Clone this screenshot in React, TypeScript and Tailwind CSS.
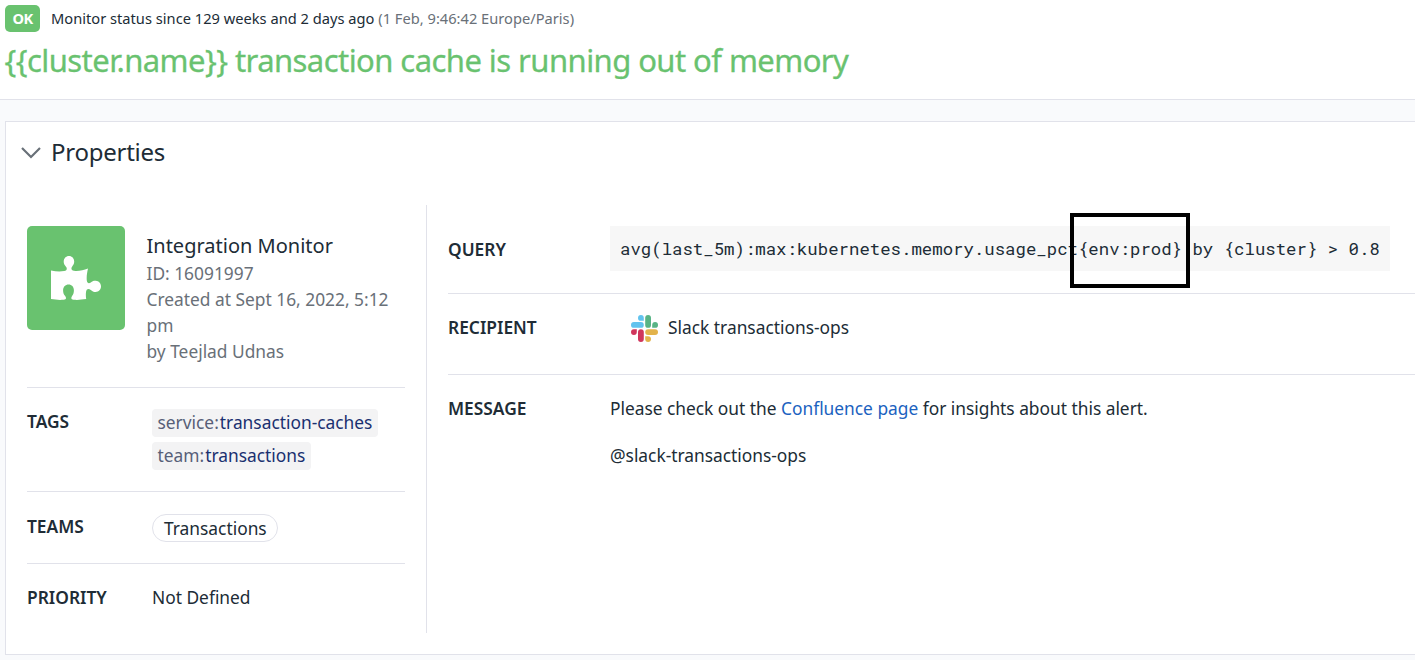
import React from "react";

const dark = "text-[#202c36]";

function Puzzle() {
  return (
    <svg viewBox="0 0 50 44" className="block h-[44px] w-[50px]" fill="#fff">
      <path d="M0 14.5C5 15.6 9 15.8 13.2 15.1C16.2 14.5 16.4 12.4 14.8 10.6C13.4 9 12.7 7.6 12.7 5.6C12.7 2.4 15 0 18 0C21 0 23.2 2.4 23.2 5.6C23.2 7.6 22.4 9 21.2 10.6C19.8 12.4 20.2 14.3 23 14.8C27.6 15.5 32.4 14 37 12.4C36 17 35.4 20.5 35.8 24.5C36.2 27.3 38 27.8 39.8 26.4C41.4 25.1 42.8 24.6 44.8 24.8C47.8 25.1 50 27.2 50 30.3C50 33.6 47.8 36 44.6 36C42.6 36 41.2 35.1 39.8 33.9C37.8 32.2 35.6 32.6 35.1 35.4C34.7 38 34.8 40.5 35.2 43.1C30.5 43.8 26.5 44.2 22.6 43.8C20 43.4 19.8 41.8 21.2 39.8C22.3 38.2 22.9 36.8 22.9 34.2C22.9 31 20.7 28.6 17.6 28.6C14.4 28.6 12.1 31 12.1 34.2C12.1 36.8 12.7 38.2 14 39.8C15.6 41.8 15.4 43.4 12.6 43.8C8.4 44.2 4 43.8 0 43.1Z" />
    </svg>
  );
}

function Slack() {
  return (
    <svg viewBox="0 0 27 27" className="block size-[27px] shrink-0">
      <g fill="#62c3ee">
        <rect x="0" y="7" width="12.8" height="5.8" rx="2.9" />
        <path d="M12.8 5.8H9.9A2.9 2.9 0 1 1 12.8 2.9Z" />
      </g>
      <g fill="#58b485">
        <rect x="14.2" y="0" width="5.8" height="12.8" rx="2.9" />
        <path d="M21.2 12.8V9.9A2.9 2.9 0 1 1 24.1 12.8Z" />
      </g>
      <g fill="#e3b34b">
        <rect x="14.2" y="14.2" width="12.8" height="5.8" rx="2.9" />
        <path d="M14.2 21.2H17.1A2.9 2.9 0 1 1 14.2 24.1Z" />
      </g>
      <g fill="#d0365c">
        <rect x="7" y="14.2" width="5.8" height="12.8" rx="2.9" />
        <path d="M5.8 14.2V17.1A2.9 2.9 0 1 1 2.9 14.2Z" />
      </g>
    </svg>
  );
}

function Tag({ name, value }: { name: string; value: string }) {
  return (
    <div className="flex h-7 w-fit items-center gap-px rounded bg-[#f3f3f4] px-[5.5px] pb-[2px] text-[17.35px] text-[#585f78]">
      <span>{name}:</span>
      <span className="text-[#1a3070]">{value}</span>
    </div>
  );
}

export default function App() {
  return (
    <div className={`h-[660px] w-[1415px] overflow-hidden bg-[#f9fafc] font-['Noto_Sans',sans-serif] ${dark}`}>
      <header className="h-[100px] border-b border-[#e1e2ea] bg-white pt-[5px] pl-[5px]">
        <div className="flex h-[27px] items-center">
          <span className="flex h-[27px] w-[35px] items-center justify-center rounded-[5px] bg-[#69c26f] text-[14.6px] font-bold tracking-[-0.5px] text-white">OK</span>
          <p className="ml-[11px] pb-px text-[14.65px] leading-[21px] tracking-[0.01px] whitespace-nowrap">
            <span>Monitor status since 129 weeks and 2 days ago</span>{" "}
            <span className="text-[#697078]">(1 Feb, 9:46:42 Europe/Paris)</span>
          </p>
        </div>
        <h1 className="-ml-[0.5px] mt-[8px] w-fit text-[31px] leading-[40px] tracking-[-0.56px] whitespace-nowrap text-[#69c26f] [-webkit-text-stroke:0.3px_#69c26f]">
          {"{{cluster.name}} transaction cache is running out of memory"}
        </h1>
      </header>

      <section className="mt-[21px] ml-[5px] h-[534px] border border-r-0 border-[#e1e2ea] bg-white">
        <div className="flex h-[83px] items-start pt-[12px] pl-[15px]">
          <svg viewBox="0 0 20 12" className="mt-[13px] h-3 w-5" fill="none" stroke="#697078" strokeWidth="2.2">
            <path d="M1 1L10 10L19 1" />
          </svg>
          <h2 className="ml-[10px] text-[24px] leading-[36px] tracking-[-0.25px]">Properties</h2>
        </div>

        <div className="flex h-[428px] pl-[21px]">
          <div className="w-[400px] border-r border-[#e1e2ea] pt-[21px] pr-[21px]">
            <div className="flex h-[162px] border-b border-[#e1e2ea]">
              <div className="flex h-[104px] w-[98px] shrink-0 items-center justify-center rounded-[5px] bg-[#69c26f]">
                <Puzzle />
              </div>
              <div className="ml-[21.5px] pt-[6px] text-[17.35px] leading-[26px] text-[#697078]">
                <h3 className={`text-[20px] leading-[28px] ${dark}`}>Integration Monitor</h3>
                <p>ID: 16091997</p>
                <p>Created at Sept 16, 2022, 5:12<br />pm</p>
                <p>by Teejlad Udnas</p>
              </div>
            </div>
            <div className="flex h-[104px] border-b border-[#e1e2ea] pt-[21px]">
              <h4 className="-mt-px w-[125px] text-[17.35px] leading-[26px] font-semibold">TAGS</h4>
              <div className="flex flex-col gap-[5px]">
                <Tag name="service" value="transaction-caches" />
                <Tag name="team" value="transactions" />
              </div>
            </div>
            <div className="flex h-[72px] border-b border-[#e1e2ea] pt-[22px]">
              <h4 className="-mt-px w-[125px] text-[17.35px] leading-[26px] font-semibold">TEAMS</h4>
              <span className="flex h-7 items-center rounded-full border border-[#e1e2ea] pl-[11px] pr-[10px] text-[17.35px]">Transactions</span>
            </div>
            <div className="flex pt-[20px] text-[17.35px] leading-[26px]">
              <h4 className="w-[125px] font-semibold">PRIORITY</h4>
              <p>Not Defined</p>
            </div>
          </div>

          <div className="ml-[21px] flex-1 text-[17.35px]">
            <div className="flex h-[89px] border-b border-[#e1e2ea] pt-[21px]">
              <h4 className="w-[162px] pt-[10px] leading-[26px] font-semibold">QUERY</h4>
              <div className="relative h-[45px] w-[780px] bg-[#f7f7f7] pl-[10px]">
                <code className="block w-fit font-['Roboto_Mono','Liberation_Mono',monospace] text-[17.35px] leading-[46px] whitespace-nowrap">
                  {"avg(last_5m):max:kubernetes.memory.usage_pct{env:prod} by {cluster} > 0.8"}
                </code>
                <div className="absolute top-[-13px] left-[460px] h-[75px] w-[120px] border-4 border-black" />
              </div>
            </div>
            <div className="flex h-[81px] border-b border-[#e1e2ea] pt-[20px]">
              <h4 className="w-[162px] leading-[26px] font-semibold">RECIPIENT</h4>
              <div className="flex items-start gap-[10px] pl-[21px]">
                <span className="pt-px"><Slack /></span>
                <span className="leading-[26px]">Slack transactions-ops</span>
              </div>
            </div>
            <div className="flex pt-[20px] leading-[26px]">
              <h4 className="w-[162px] font-semibold">MESSAGE</h4>
              <div className="tracking-[-0.01px]">
                <p>Please check out the <a className="text-[#1b62c0]">Confluence page</a> for insights about this alert.</p>
                <p className="mt-[21px]">@slack-transactions-ops</p>
              </div>
            </div>
          </div>
        </div>
      </section>
    </div>
  );
}
